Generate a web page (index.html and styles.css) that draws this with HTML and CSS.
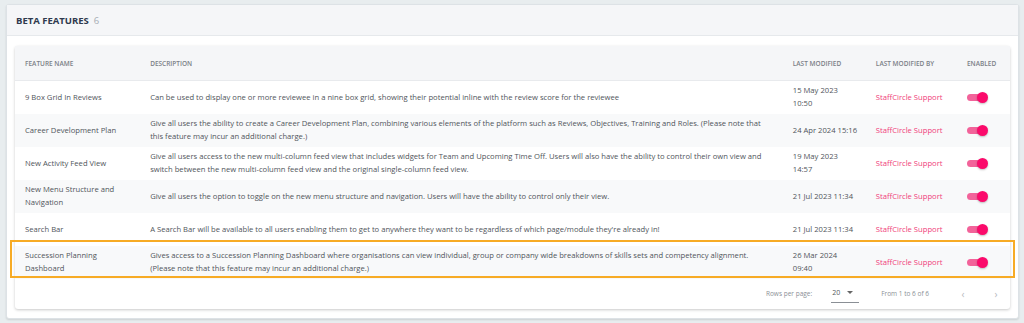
FILE: index.html
```html
<!DOCTYPE html>
<html lang="en">
<head>
    <meta charset="UTF-8">
    <title>Beta Features</title>
    <link rel="stylesheet" href="styles.css">
</head>
<body>
    <div class="card">
        <div class="card-header">
            <span class="card-title">Beta Features</span>
            <span class="card-count">6</span>
        </div>
        <div class="card-body">
            <div class="table-card">
                <table class="features">
                    <colgroup>
                        <col class="col-name">
                        <col class="col-desc">
                        <col class="col-date">
                        <col class="col-by">
                        <col class="col-enabled">
                    </colgroup>
                    <thead>
                        <tr>
                            <th>Feature Name</th>
                            <th>Description</th>
                            <th>Last Modified</th>
                            <th>Last Modified By</th>
                            <th>Enabled</th>
                        </tr>
                    </thead>
                    <tbody>
                        <tr>
                            <td>9 Box Grid In Reviews</td>
                            <td>Can be used to display one or more reviewee in a nine box grid, showing their potential inline with the review score for the reviewee</td>
                            <td>15 May 2023<br>10:50</td>
                            <td><a href="#">StaffCircle Support</a></td>
                            <td><span class="toggle"></span></td>
                        </tr>
                        <tr>
                            <td>Career Development Plan</td>
                            <td>Give all users the ability to create a Career Development Plan, combining various elements of the platform such as Reviews, Objectives, Training and Roles. (Please note that this feature may incur an additional charge.)</td>
                            <td>24 Apr 2024 15:16</td>
                            <td><a href="#">StaffCircle Support</a></td>
                            <td><span class="toggle"></span></td>
                        </tr>
                        <tr>
                            <td>New Activity Feed View</td>
                            <td>Give all users access to the new multi-column feed view that includes widgets for Team and Upcoming Time Off. Users will also have the ability to control their own view and switch between the new multi-column feed view and the original single-column feed view.</td>
                            <td>19 May 2023<br>14:57</td>
                            <td><a href="#">StaffCircle Support</a></td>
                            <td><span class="toggle"></span></td>
                        </tr>
                        <tr>
                            <td>New Menu Structure and Navigation</td>
                            <td>Give all users the option to toggle on the new menu structure and navigation. Users will have the ability to control only their view.</td>
                            <td>21 Jul 2023 11:34</td>
                            <td><a href="#">StaffCircle Support</a></td>
                            <td><span class="toggle"></span></td>
                        </tr>
                        <tr>
                            <td>Search Bar</td>
                            <td>A Search Bar will be available to all users enabling them to get to anywhere they want to be regardless of which page/module they're already in!</td>
                            <td>21 Jul 2023 11:34</td>
                            <td><a href="#">StaffCircle Support</a></td>
                            <td><span class="toggle"></span></td>
                        </tr>
                        <tr class="highlight">
                            <td>Succession Planning Dashboard</td>
                            <td>Gives access to a Succession Planning Dashboard where organisations can view individual, group or company wide breakdowns of skills sets and competency alignment.<br>(Please note that this feature may incur an additional charge.)</td>
                            <td>26 Mar 2024<br>09:40</td>
                            <td><a href="#">StaffCircle Support</a></td>
                            <td><span class="toggle"></span></td>
                        </tr>
                    </tbody>
                </table>
                <div class="pager">
                    <span class="pager-label">Rows per page:</span>
                    <span class="pager-select">20 <span class="caret"></span></span>
                    <span class="pager-range">From 1 to 6 of 6</span>
                    <span class="pager-arrow">&#8249;</span>
                    <span class="pager-arrow">&#8250;</span>
                </div>
            </div>
        </div>
    </div>
</body>
</html>
```

FILE: styles.css
```css
/* Page */
body {
    margin: 0;
    padding: 4px 5px 5px 6px;
    background: #e8edef;
    font-family: 'Open Sans', sans-serif;
    font-size: 7.65px;
    color: #50555b;
}

/* Outer card */
.card {
    background: #fff;
    border: 1px solid #dde2e6;
    border-radius: 3px;
    box-shadow: 0 1px 2px rgba(0, 0, 0, 0.12);
}

.card-header {
    background: #f5f6f8;
    border-bottom: 1px solid #e6e9ec;
    height: 30px;
    padding-left: 9px;
    display: flex;
    align-items: center;
    gap: 5px;
}

.card-title {
    font-size: 9.5px;
    font-weight: 700;
    text-transform: uppercase;
    color: #2f3a4e;
}

.card-count {
    font-size: 9.5px;
    color: #a7adb4;
}

.card-body {
    padding: 10px 8px 9px 8px;
}

/* Inner table card */
.table-card {
    position: relative;
    background: #fff;
    border-radius: 3px;
    box-shadow: 0 1px 3px rgba(0, 0, 0, 0.22);
}

.features {
    width: 100%;
    border-collapse: collapse;
    table-layout: fixed;
}

.col-name { width: 125px; }
.col-desc { width: 642px; }
.col-date { width: 83px; }
.col-by { width: 91px; }
.col-enabled { width: 53px; }

.features th {
    background: #f5f6f8;
    height: 34px;
    padding: 0 10px;
    text-align: left;
    font-size: 6.5px;
    font-weight: 600;
    text-transform: uppercase;
    color: #7b8087;
    border-bottom: 1px solid #e8eaed;
}

.features td {
    height: 33px;
    padding: 0 10px;
    line-height: 13px;
    vertical-align: middle;
    box-sizing: border-box;
}

.features td:nth-child(3) {
    padding-right: 2px;
}

.features tbody tr:nth-child(even) td {
    background: #f8f9fa;
}

.features a {
    color: #f0407a;
    text-decoration: none;
}

/* Highlight frame drawn over the last row */
.features tr.highlight td:first-child {
    position: relative;
}

.features tr.highlight td:first-child::after {
    content: "";
    position: absolute;
    left: -5px;
    top: -6px;
    width: 1001px;
    height: 34px;
    border: 2px solid #f7ab25;
    pointer-events: none;
}

/* Toggle switch */
.toggle {
    position: relative;
    display: inline-block;
    width: 18px;
    height: 7px;
    border-radius: 4px;
    background: #f2639a;
    vertical-align: middle;
}

.toggle::after {
    content: "";
    position: absolute;
    right: -3px;
    top: -2px;
    width: 11px;
    height: 11px;
    border-radius: 50%;
    background: #fb0a6b;
    box-shadow: 0 1px 2px rgba(0, 0, 0, 0.25);
}

/* Pagination */
.pager {
    height: 30px;
    display: flex;
    align-items: center;
    justify-content: flex-end;
    padding-right: 3px;
    font-size: 6.5px;
    color: #8b9096;
}

.pager-label {
    margin-right: 19px;
}

.pager-select {
    display: inline-flex;
    align-items: center;
    gap: 7px;
    width: 27px;
    padding: 4px 0 5px 1px;
    border-bottom: 1px solid #8a8f95;
    color: #555a60;
    font-size: 7px;
    margin-right: 22px;
}

.caret {
    width: 0;
    height: 0;
    border-left: 3px solid transparent;
    border-right: 3px solid transparent;
    border-top: 3px solid #666;
}

.pager-range {
    margin-right: 23px;
}

.pager-arrow {
    width: 22px;
    text-align: center;
    font-size: 10px;
    color: #b5b9be;
}

.pager-arrow + .pager-arrow {
    margin-left: 11px;
}
```
